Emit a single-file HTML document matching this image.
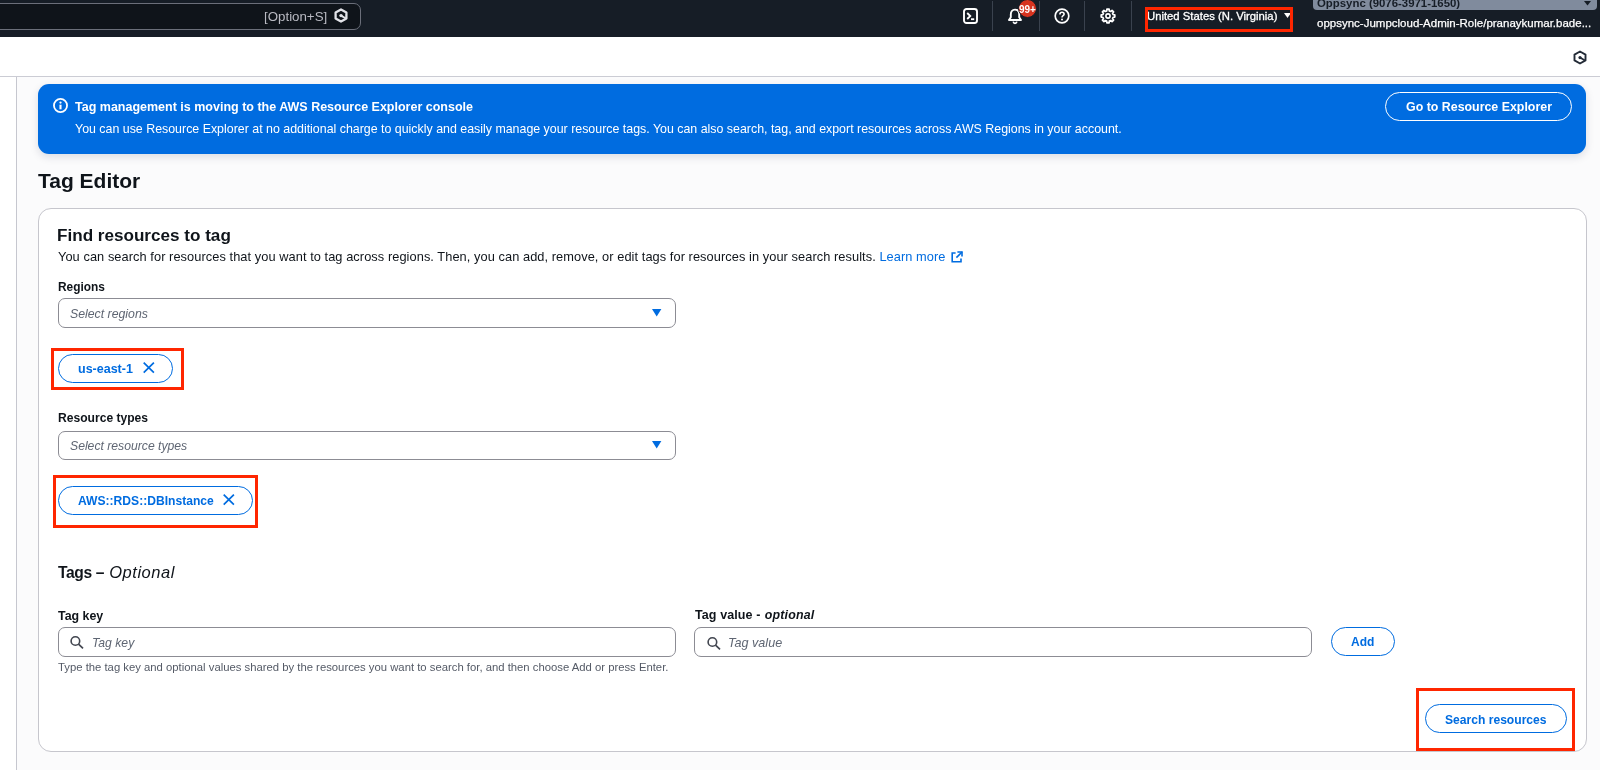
<!DOCTYPE html>
<html>
<head>
<meta charset="utf-8">
<title>Tag Editor</title>
<style>
*{box-sizing:border-box;margin:0;padding:0}
html,body{width:1600px;height:770px;overflow:hidden;background:#fbfbfc;font-family:"Liberation Sans",sans-serif;color:#0f141a}
.abs{position:absolute;white-space:nowrap}
#top{position:absolute;left:0;top:0;width:1600px;height:37px;background:#161d26}
#sub{position:absolute;left:0;top:37px;width:1600px;height:40px;background:#fff;border-bottom:1px solid #cbccd4}
#nav{position:absolute;left:0;top:77px;width:17px;height:693px;background:#fff;border-right:1.4px solid #c6c7cf}
.t{position:absolute;white-space:nowrap;line-height:1;will-change:transform}
.b{font-weight:bold}
.i{font-style:italic}
.inp{position:absolute;height:29.5px;border:1.5px solid #8c8c94;border-radius:7px;background:#fff}
.pill{position:absolute;border:1.7px solid #006ce0;border-radius:16px;background:#fff}
.red{position:absolute;border:3.1px solid #ff2600}
.blue{color:#006ce0}
.div{position:absolute;top:1px;width:1.2px;height:30px;background:#3a424e}
svg{position:absolute;overflow:visible}
</style>
</head>
<body>
<div id="top"></div>
<div id="sub"></div>
<div id="nav"></div>

<!-- header search box -->
<div class="abs" style="left:-10px;top:3px;width:370.5px;height:26.5px;border:1.8px solid #6b6f7a;border-radius:7px;background:#0f141a"></div>
<div class="t" id="t_opt" style="left:264.3px;top:9.7px;font-size:13.3px;color:#b9bac2">[Option+S]</div>
<!-- Q hex icon (header) -->
<svg id="qhex1" style="left:334px;top:7.9px" width="14" height="15" viewBox="0 0 14 15"><path d="M7 1.5 L12.4 4.6 L12.4 10.4 L7 13.5 L1.6 10.4 L1.6 4.6 Z" fill="none" stroke="#e2e3e8" stroke-width="2.3" stroke-linejoin="round"/><circle cx="7" cy="7.6" r="1.7" fill="#e2e3e8"/><path d="M7 7.6 L12 10.5" stroke="#e2e3e8" stroke-width="1.9"/></svg>

<!-- header right icons -->
<svg style="left:963px;top:8px" width="15" height="16" viewBox="0 0 15 16"><rect x="1" y="1" width="13" height="14" rx="2.5" fill="none" stroke="#fff" stroke-width="1.9"/><path d="M4.2 5 L7.3 8 L4.2 11" fill="none" stroke="#fff" stroke-width="1.8"/><path d="M8 11.2 H11.2" stroke="#fff" stroke-width="1.8"/></svg>
<div class="div" style="left:992px"></div>
<svg style="left:1007px;top:8px" width="16" height="17" viewBox="0 0 16 17"><path d="M8 1.6 C5.2 1.6 3.8 3.8 3.8 6.4 V9.2 L2 12 H14 L12.2 9.2 V6.4 C12.2 3.8 10.8 1.6 8 1.6 Z" fill="none" stroke="#fff" stroke-width="1.9" stroke-linejoin="round"/><path d="M6.2 13.6 C6.4 14.8 7.1 15.4 8 15.4 C8.9 15.4 9.6 14.8 9.8 13.6" fill="none" stroke="#fff" stroke-width="1.6"/></svg>
<div class="abs" style="left:1017.5px;top:-1px;width:19.4px;height:19.4px;border-radius:10px;background:#d6331f;border:1px solid #161d26"></div>
<div class="t b" id="t_99" style="left:1019.1px;top:5.2px;font-size:10px;color:#fff;letter-spacing:-0.1px">99+</div>
<div class="div" style="left:1039px"></div>
<svg style="left:1053.5px;top:8px" width="16" height="16" viewBox="0 0 16 16"><circle cx="8" cy="8" r="6.8" fill="none" stroke="#fff" stroke-width="1.7"/><path d="M5.9 6.4 C5.9 5 6.8 4.3 8 4.3 C9.2 4.3 10.1 5 10.1 6.2 C10.1 7.6 8 7.7 8 9.4" fill="none" stroke="#fff" stroke-width="1.6"/><circle cx="8" cy="11.5" r="1" fill="#fff"/></svg>
<div class="div" style="left:1084px"></div>
<svg id="gear" style="left:1099.8px;top:8px" width="16" height="16" viewBox="0 0 16 16"><path d="M6.74 2.85 L6.90 1.19 L9.10 1.19 L9.26 2.85 L10.75 3.47 L12.04 2.41 L13.59 3.96 L12.53 5.25 L13.15 6.74 L14.81 6.90 L14.81 9.10 L13.15 9.26 L12.53 10.75 L13.59 12.04 L12.04 13.59 L10.75 12.53 L9.26 13.15 L9.10 14.81 L6.90 14.81 L6.74 13.15 L5.25 12.53 L3.96 13.59 L2.41 12.04 L3.47 10.75 L2.85 9.26 L1.19 9.10 L1.19 6.90 L2.85 6.74 L3.47 5.25 L2.41 3.96 L3.96 2.41 L5.25 3.47 Z" fill="none" stroke="#fff" stroke-width="1.7" stroke-linejoin="round"/><circle cx="8" cy="8" r="2.1" fill="none" stroke="#fff" stroke-width="1.6"/></svg>
<div class="div" style="left:1130.5px"></div>

<div class="t" id="t_region" style="left:1147.3px;top:11.2px;font-size:11.3px;color:#fff;-webkit-text-stroke:0.3px #fff">United States (N. Virginia)</div>
<svg style="left:1283.5px;top:13px" width="7" height="5" viewBox="0 0 7 5"><path d="M0 0 H7 L3.5 5 Z" fill="#fff"/></svg>
<div class="abs" style="left:1313px;top:-8px;width:284px;height:18.4px;background:#808b9d;border-radius:4px"></div>
<div class="t b" id="t_acct" style="left:1317px;top:-2.2px;font-size:11.4px;color:#161d26">Oppsync (9076-3971-1650)</div>
<svg style="left:1583.5px;top:1px" width="7" height="5" viewBox="0 0 7 5"><path d="M0 0 H7 L3.5 4.6 Z" fill="#161d26"/></svg>
<div class="t" id="t_role" style="left:1317px;top:18.2px;font-size:11.5px;color:#fff;-webkit-text-stroke:0.25px #fff">oppsync-Jumpcloud-Admin-Role/pranaykumar.bade...</div>
<div class="red" style="left:1145px;top:6.9px;width:148px;height:24.8px;border-width:3.6px"></div>

<!-- Q hex icon (sub bar) -->
<svg id="qhex2" style="left:1573.35px;top:49.5px" width="14" height="15" viewBox="0 0 14 15"><path d="M7 1.5 L12.5 4.6 L12.5 10.4 L7 13.5 L1.5 10.4 L1.5 4.6 Z" fill="none" stroke="#232b37" stroke-width="1.9" stroke-linejoin="round"/><circle cx="7" cy="7.6" r="1.6" fill="#232b37"/><path d="M7 7.6 L12 10.5" stroke="#232b37" stroke-width="1.7"/></svg>

<!-- banner -->
<div class="abs" style="left:38.2px;top:83.8px;width:1548.2px;height:70.2px;background:#006ce0;border-radius:11px;box-shadow:0 3px 9px rgba(0,20,60,.13)"></div>
<svg style="left:52.9px;top:98.3px" width="15" height="15" viewBox="0 0 15 15"><circle cx="7.5" cy="7.5" r="6.55" fill="none" stroke="#fff" stroke-width="1.8"/><circle cx="7.5" cy="4.6" r="1.15" fill="#fff"/><path d="M7.5 6.7 V11.3" stroke="#fff" stroke-width="2.1"/></svg>
<div class="t b" id="t_btitle" style="left:75.30px;top:100.80px;font-size:12.5px;color:#fff">Tag management is moving to the AWS Resource Explorer console</div>
<div class="t" id="t_btext" style="left:75.3px;top:122.50px;font-size:12.4px;color:#fff">You can use Resource Explorer at no additional charge to quickly and easily manage your resource tags. You can also search, tag, and export resources across AWS Regions in your account.</div>
<div class="abs" style="left:1385px;top:91.5px;width:187px;height:29.5px;border:1.9px solid #fff;border-radius:15px"></div>
<div class="t b" id="t_goto" style="left:1405.5px;top:101.30px;font-size:12.4px;color:#fff">Go to Resource Explorer</div>

<!-- title -->
<div class="t b" id="t_title" style="left:38px;top:169.80px;font-size:21px">Tag Editor</div>

<!-- container -->
<div class="abs" style="left:38px;top:208px;width:1548.5px;height:543.8px;border:1.2px solid #c6c6cd;border-radius:13px;background:#fff"></div>
<div class="t b" id="t_find" style="left:57.30px;top:227.30px;font-size:17.1px">Find resources to tag</div>
<div class="t" id="t_desc" style="left:58px;top:251.20px;font-size:12.8px;letter-spacing:0.068px">You can search for resources that you want to tag across regions. Then, you can add, remove, or edit tags for resources in your search results. <span class="blue" id="t_learn">Learn more</span></div>
<svg style="left:950.5px;top:250.5px" width="12" height="12" viewBox="0 0 12 12"><path d="M4.6 2 H1.2 V10.8 H10 V7.4" fill="none" stroke="#006ce0" stroke-width="1.6"/><path d="M6.4 1 H11 V5.6" fill="none" stroke="#006ce0" stroke-width="1.6"/><path d="M11 1 L5.4 6.6" stroke="#006ce0" stroke-width="1.6"/></svg>

<div class="t b" id="t_regions" style="left:58.2px;top:281.95px;font-size:11.9px">Regions</div>
<div class="inp" style="left:58px;top:298.3px;width:618px"></div>
<div class="t i" id="t_selreg" style="left:70px;top:307.8px;font-size:12.3px;color:#5f6673">Select regions</div>
<svg style="left:652.3px;top:309px" width="9.4" height="7.6" viewBox="0 0 9.4 7.6"><path d="M0 0 H9.4 L4.7 7.6 Z" fill="#006ce0"/></svg>

<div class="red" style="left:50.6px;top:348px;width:133.3px;height:41.8px"></div>
<div class="pill" style="left:57.8px;top:353.5px;width:115px;height:29.5px"></div>
<div class="t b blue" id="t_use1" style="left:77.8px;top:362.7px;font-size:12.5px">us-east-1</div>
<svg style="left:143.3px;top:362.2px" width="11.6" height="11.4" viewBox="0 0 11.6 11.4"><path d="M0.7 0.7 L10.9 10.7 M10.9 0.7 L0.7 10.7" stroke="#006ce0" stroke-width="1.7" fill="none"/></svg>

<div class="t b" id="t_restypes" style="left:58.2px;top:412.20px;font-size:12.1px">Resource types</div>
<div class="inp" style="left:58px;top:430.5px;width:618px"></div>
<div class="t i" id="t_selres" style="left:70px;top:439.70px;font-size:12.2px;color:#5f6673">Select resource types</div>
<svg style="left:652.3px;top:441px" width="9.4" height="7.6" viewBox="0 0 9.4 7.6"><path d="M0 0 H9.4 L4.7 7.6 Z" fill="#006ce0"/></svg>

<div class="red" style="left:53.3px;top:474.8px;width:204.7px;height:53.1px"></div>
<div class="pill" style="left:57.8px;top:485.6px;width:195px;height:29.5px"></div>
<div class="t b blue" id="t_rds" style="left:77.8px;top:494.9px;font-size:12.1px">AWS::RDS::DBInstance</div>
<svg style="left:223.3px;top:494.4px" width="11.6" height="11.4" viewBox="0 0 11.6 11.4"><path d="M0.7 0.7 L10.9 10.7 M10.9 0.7 L0.7 10.7" stroke="#006ce0" stroke-width="1.7" fill="none"/></svg>

<div class="t" id="t_tags" style="left:58.2px;top:563.60px;font-size:16.5px"><span class="b" id="t_tagsb" style="font-size:15.6px;letter-spacing:-0.35px">Tags –</span><span class="i" id="t_tagsi" style="margin-left:5px;letter-spacing:0.55px">Optional</span></div>

<div class="t b" id="t_tagkey" style="left:58.2px;top:609.70px;font-size:12.4px">Tag key</div>
<div class="inp" style="left:58px;top:627.2px;width:618px"></div>
<svg style="left:70.2px;top:636.2px" width="14" height="13" viewBox="0 0 14 13"><circle cx="5.4" cy="5" r="4.3" fill="none" stroke="#424650" stroke-width="1.6"/><path d="M8.5 8.1 L13 12.4" stroke="#424650" stroke-width="1.7"/></svg>
<div class="t i" id="t_tagkeyph" style="left:91.50px;top:637.10px;font-size:12.2px;color:#5f6673">Tag key</div>
<div class="t" id="t_hint" style="left:58.20px;top:662.20px;font-size:11.3px;color:#545a66">Type the tag key and optional values shared by the resources you want to search for, and then choose Add or press Enter.</div>

<div class="t" id="t_tagval" style="left:694.70px;top:608.95px;font-size:12.5px"><span class="b" id="t_tagvalb" style="letter-spacing:0.1px">Tag value -</span><span class="i b" id="t_tagvali" style="margin-left:4.4px;font-size:12.4px;letter-spacing:0.16px">optional</span></div>
<div class="inp" style="left:694.3px;top:627.2px;width:618px"></div>
<svg style="left:706.8px;top:636.6px" width="14" height="13" viewBox="0 0 14 13"><circle cx="5.4" cy="5" r="4.3" fill="none" stroke="#424650" stroke-width="1.6"/><path d="M8.5 8.1 L13 12.4" stroke="#424650" stroke-width="1.7"/></svg>
<div class="t i" id="t_tagvalph" style="left:727.9px;top:637.40px;font-size:12.6px;color:#5f6673">Tag value</div>

<div class="pill" style="left:1330.8px;top:626.8px;width:64.6px;height:29.5px"></div>
<div class="t b blue" id="t_add" style="left:1351.2px;top:636.20px;font-size:12px">Add</div>

<div class="red" style="left:1415.9px;top:688.1px;width:159.1px;height:63.2px"></div>
<div class="pill" style="left:1424.6px;top:704px;width:142.6px;height:29px"></div>
<div class="t b blue" id="t_search" style="left:1445px;top:713.80px;font-size:12.1px">Search resources</div>

</body>
</html>
